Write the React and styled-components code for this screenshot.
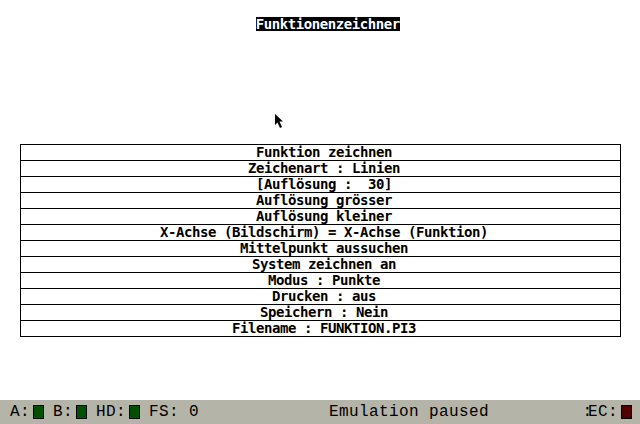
import React from "react";
import styled, { createGlobalStyle } from "styled-components";

const GlobalStyle = createGlobalStyle`
  html, body {
    margin: 0;
    padding: 0;
    background: #ffffff;
  }
  #root {
    height: 424px;
  }
`;

const Screen = styled.div`
  position: relative;
  width: 640px;
  height: 424px;
  display: flex;
  flex-direction: column;
  overflow: hidden;
  font-family: "DejaVu Sans Mono", "Liberation Mono", monospace;
`;

const Desktop = styled.div`
  flex: 1;
  display: flex;
  flex-direction: column;
  align-items: center;
`;

const Title = styled.div`
  margin-top: 17px;
  margin-left: 16px;
  background: #000;
  color: #fff;
  font-weight: bold;
  font-size: 14px;
  letter-spacing: -0.43px;
  line-height: 14px;
  height: 14px;
  padding-right: 0.43px;
  white-space: pre;
`;

const Menu = styled.div`
  margin-top: 113px;
  width: 601px;
  box-sizing: border-box;
  border: 1px solid #000;
  border-bottom: none;
  display: flex;
  flex-direction: column;
`;

const Row = styled.div`
  height: 15px;
  padding-left: 8px;
  border-bottom: 1px solid #000;
  text-align: center;
  font-weight: bold;
  font-size: 14px;
  letter-spacing: -0.43px;
  line-height: 15px;
  color: #000;
  white-space: pre;
`;

const StatusBar = styled.div`
  height: 24px;
  background: #b4b4a8;
  display: flex;
  align-items: center;
  font-family: "Liberation Mono", "DejaVu Sans Mono", monospace;
  font-size: 16px;
  letter-spacing: 0.4px;
  color: #000;
  white-space: pre;
`;

const Drives = styled.div`
  width: 329px;
  padding-left: 10px;
  box-sizing: border-box;
  display: flex;
  align-items: center;
`;

const Label = styled.span`
  margin-left: ${(p) => p.$gap || 0}px;
`;

const Led = styled.span`
  display: inline-block;
  width: 9px;
  height: 12px;
  margin-left: 3px;
  border: 1px solid #000;
  background: ${(p) => p.$color};
`;

const Message = styled.span`
  flex: 1;
`;

const Rec = styled.div`
  display: flex;
  align-items: center;
  padding-right: 8px;
`;

const Colon = styled.span`
  letter-spacing: -4px;
`;

const Cursor = styled.svg`
  position: absolute;
  left: 274px;
  top: 113px;
`;

const items = [
  "Funktion zeichnen",
  "Zeichenart : Linien",
  "[Auflösung :  30]",
  "Auflösung grösser",
  "Auflösung kleiner",
  "X-Achse (Bildschirm) = X-Achse (Funktion)",
  "Mittelpunkt aussuchen",
  "System zeichnen an",
  "Modus : Punkte",
  "Drucken : aus",
  "Speichern : Nein",
  "Filename : FUNKTION.PI3",
];

export default function App() {
  return (
    <Screen>
      <GlobalStyle />
      <Desktop>
        <Title>Funktionenzeichner</Title>
        <Menu>
          {items.map((t) => (
            <Row key={t}>{t}</Row>
          ))}
        </Menu>
      </Desktop>
      <StatusBar>
        <Drives>
          <Label>A:</Label>
          <Led $color="#005000" />
          <Label $gap={9}>B:</Label>
          <Led $color="#005000" />
          <Label $gap={9}>HD:</Label>
          <Led $color="#005000" />
          <Label $gap={9}>FS: 0</Label>
        </Drives>
        <Message>Emulation paused</Message>
        <Rec>
          <Colon>:</Colon>
          <span>EC:</span>
          <Led $color="#500000" />
        </Rec>
      </StatusBar>
      <Cursor width="11" height="17" viewBox="0 0 11 17">
        <path d="M1 1 L1 12 L3.5 9.5 L6 15 L8 14 L5.5 8.5 L9 8.5 Z" fill="#000" />
      </Cursor>
    </Screen>
  );
}
